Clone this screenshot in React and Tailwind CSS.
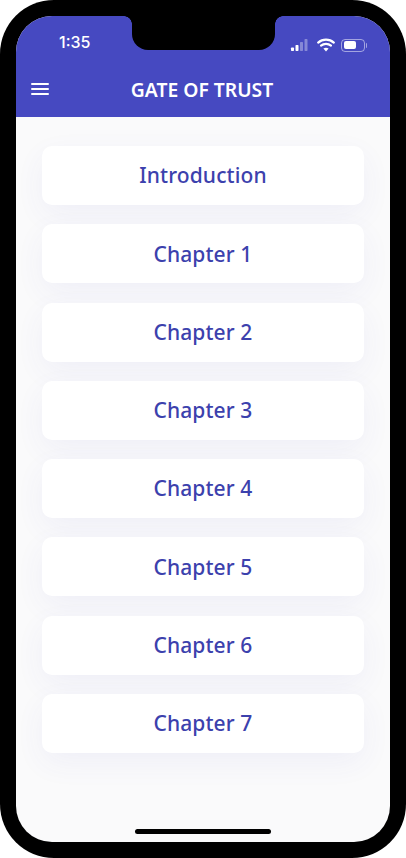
const chapters = ["Introduction", "Chapter 1", "Chapter 2", "Chapter 3", "Chapter 4", "Chapter 5", "Chapter 6", "Chapter 7"];

function StatusIcons() {
    return (
        <div className="flex items-center">
            <svg width="20" height="14" viewBox="0 0 20 14" className="mr-[7px]">
                <rect x="1" y="9.5" width="3" height="3.5" rx="0.7" fill="#fff" />
                <rect x="5.5" y="7" width="3" height="6" rx="0.7" fill="#fff" />
                <rect x="10" y="4" width="3" height="9" rx="0.7" fill="#fff" fillOpacity="0.35" />
                <rect x="14.5" y="1" width="3" height="12" rx="0.7" fill="#fff" fillOpacity="0.35" />
            </svg>
            <svg width="18" height="14" viewBox="0 0 18 14" className="mr-[6px]" fill="none" stroke="#fff" strokeLinecap="round">
                <path d="M1.2 4.6C5.6 .6 12.4 .6 16.8 4.6" strokeWidth="2.2" />
                <path d="M4 7.6C6.8 5.2 11.2 5.2 14 7.6" strokeWidth="2.2" />
                <path d="M9 13.4L6.4 10.6C8 9.4 10 9.4 11.6 10.6Z" fill="#fff" stroke="none" />
            </svg>
            <div className="flex items-center">
                <div className="w-[24px] h-[13px] rounded-[4px] border border-white/50 p-[1.5px]">
                    <div className="w-[12px] h-full rounded-[2px] bg-white" />
                </div>
                <div className="w-[1.5px] h-[5px] ml-[0.5px] rounded-r-sm bg-white/50" />
            </div>
        </div>
    );
}

export default function App() {
    return (
        <div className="w-[406px] h-[858px] bg-white font-['Noto_Sans','Open_Sans',sans-serif]">
            <div className="w-full h-full bg-black rounded-[54px] p-[16px]">
                <div className="relative w-full h-full rounded-[36px] overflow-hidden bg-[#fafafb] flex flex-col">
                    {/* Notch */}
                    <div className="absolute top-0 left-[116px] w-[143px] h-[34px] bg-black rounded-b-[16px]" />
                    <div className="absolute top-0 left-[108px] w-[8px] h-[8px] bg-[radial-gradient(circle_at_0_100%,#4649c1_7.5px,#000_8px)]" />
                    <div className="absolute top-0 left-[259px] w-[8px] h-[8px] bg-[radial-gradient(circle_at_100%_100%,#4649c1_7.5px,#000_8px)]" />

                    <header className="h-[101px] shrink-0 bg-[#4649c1] text-white">
                        <div className="h-[36px] flex items-end justify-between pl-[43px] pr-[23px]">
                            <span className="text-[16px] leading-[20px] font-medium font-['Inter',sans-serif]">1:35</span>
                            <StatusIcons />
                        </div>
                        <div className="relative h-[65px] flex items-center justify-center pt-[11px] pr-[2px]">
                            <div className="absolute left-[15px] top-[31px] w-[18px] flex flex-col gap-[3px]">
                                <div className="h-[2px] bg-white rounded-full" />
                                <div className="h-[2px] bg-white rounded-full" />
                                <div className="h-[2px] bg-white rounded-full" />
                            </div>
                            <h1 className="text-[19.3px] leading-[24px] font-semibold">GATE OF TRUST</h1>
                        </div>
                    </header>

                    <main className="flex flex-col gap-[19.3px] px-[26px] pt-[29px]">
                        {chapters.map((c) => (
                            <button
                                key={c}
                                className="h-[59px] shrink-0 rounded-[10px] bg-white pt-[1px] text-[21px] font-medium tracking-[0.1px] text-[#3c41ad] shadow-[0_10px_30px_rgba(70,73,193,0.06)]"
                            >
                                {c}
                            </button>
                        ))}
                    </main>

                    <div className="absolute bottom-[8px] left-[119px] w-[136px] h-[5px] rounded-full bg-black" />
                </div>
            </div>
        </div>
    );
}
